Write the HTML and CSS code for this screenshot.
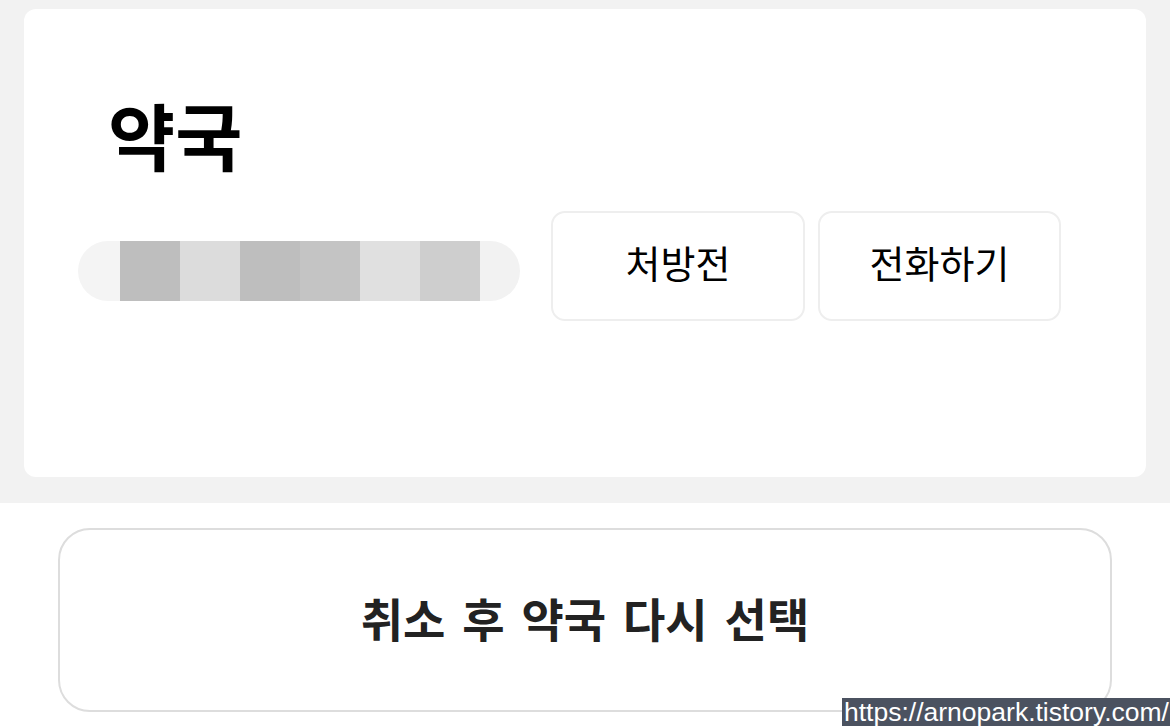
FILE: index.html
```html
<!DOCTYPE html>
<html lang="ko">
<head>
    <meta charset="UTF-8">
    <meta name="viewport" content="width=device-width, initial-scale=1.0">
    <title>약국</title>
    <link rel="stylesheet" href="styles.css">
</head>
<body>
    <!-- Pharmacy card -->
    <div class="top">
        <div class="card">
            <h1 class="title">약국</h1>
            <div class="row">
                <div class="mosaic">
                    <span class="cap-left"></span>
                    <span class="cell c1"></span>
                    <span class="cell c2"></span>
                    <span class="cell c3"></span>
                    <span class="cell c4"></span>
                    <span class="cell c5"></span>
                    <span class="cell c6"></span>
                    <span class="cap-right"></span>
                </div>
                <button class="action-button prescription">처방전</button>
                <button class="action-button call">전화하기</button>
            </div>
        </div>
    </div>

    <!-- Bottom action -->
    <div class="bottom">
        <button class="reselect-button">취소 후 약국 다시 선택</button>
    </div>

    <div class="watermark">https://arnopark.tistory.com/</div>
</body>
</html>
```
FILE: styles.css
```css
body {
    margin: 0;
    font-family: "Noto Sans CJK KR", "Noto Sans", sans-serif;
    background-color: #fff;
    height: 726px;
    overflow: hidden;
    position: relative;
}

.top {
    background-color: #f2f2f2;
    padding: 9px 24px 26px;
}

.card {
    background: #fff;
    border-radius: 12px;
    height: 468px;
    padding: 0 54px;
    box-sizing: border-box;
}

.title {
    margin: 0;
    padding: 74px 0 0 30px;
    font-size: 73px;
    line-height: 100px;
    font-weight: 700;
    color: #000;
}

.row {
    display: flex;
    align-items: center;
    margin-top: 28px;
}

.mosaic {
    display: flex;
    width: 442px;
    height: 60px;
    border-radius: 30px;
    overflow: hidden;
    margin-top: 10px;
    margin-right: 31px;
}

.cap-left {
    width: 42px;
    background: #f4f4f4;
}

.cap-right {
    width: 40px;
    background: #f2f2f2;
}

.cell {
    width: 60px;
}

.c1 { background: #bebebe; }
.c2 { background: #dcdcdc; }
.c3 { background: #bebebe; }
.c4 { background: #c4c4c4; }
.c5 { background: #e0e0e0; }
.c6 { background: #cecece; }

.action-button {
    height: 110px;
    border: 2px solid #eee;
    border-radius: 14px;
    background: #fff;
    font-family: inherit;
    font-size: 38px;
    color: #000;
    padding: 0 0 10px;
    cursor: pointer;
}

.prescription {
    width: 254px;
    margin-right: 13px;
}

.call {
    width: 243px;
}

.bottom {
    padding: 25px 58px 0;
}

.reselect-button {
    width: 100%;
    height: 184px;
    border: 2px solid #ddd;
    border-radius: 32px;
    background: #fff;
    font-family: inherit;
    font-size: 46px;
    font-weight: 700;
    color: #222;
    word-spacing: 4px;
    padding: 0 0 6px;
    cursor: pointer;
}

.watermark {
    position: absolute;
    right: 0;
    bottom: 0;
    background: #4b5260;
    color: #fff;
    font-family: "Liberation Sans", Arial, sans-serif;
    font-size: 26.5px;
    line-height: 28px;
    padding: 0 1px 0 2px;
}
```
